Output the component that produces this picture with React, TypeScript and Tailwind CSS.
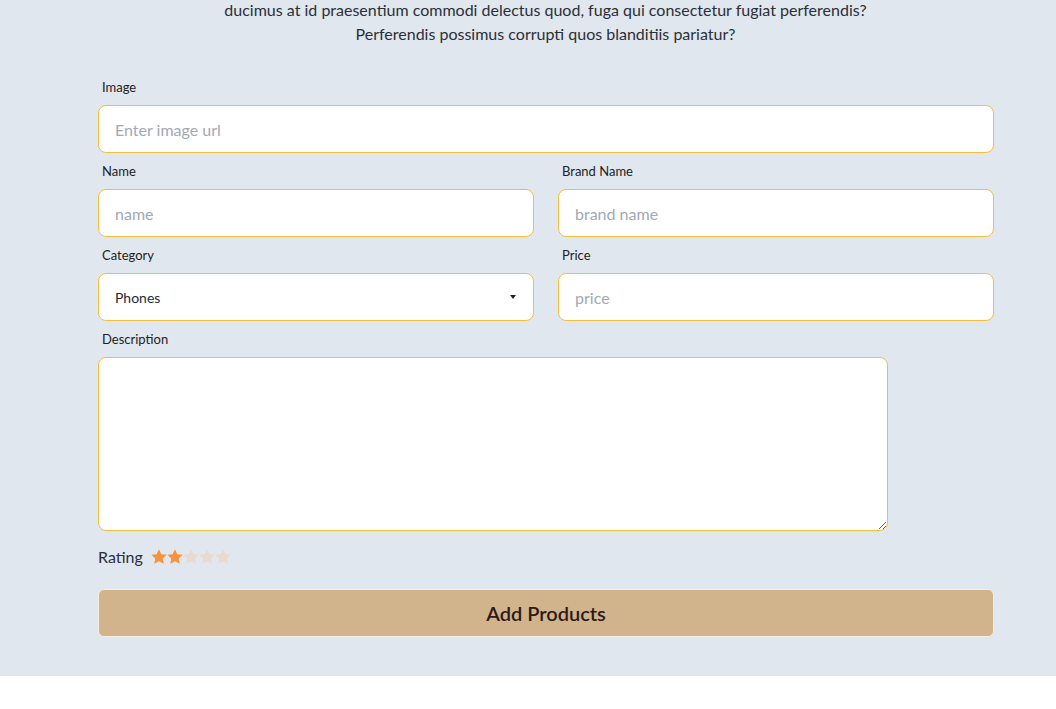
import { useState } from "react";

const inputClass =
  "h-12 w-full rounded-lg border border-[#f6bf3a] bg-white px-4 text-base text-gray-800 outline-none placeholder:text-[#a3a8b3]";

function Field({ label, children }: { label: string; children: React.ReactNode }) {
  return (
    <div>
      <label className="block px-1 py-2 text-[13px] leading-5 text-[#222]">{label}</label>
      {children}
    </div>
  );
}

function Star({ filled }: { filled: boolean }) {
  return (
    <svg viewBox="0 0 24 24" className="h-4 w-4" fill={filled ? "#f8923f" : "#ebd9cd"}>
      <path d="M12 0.5l3.5 7.3 8 1-5.9 5.5 1.5 7.9L12 18.3l-7.1 3.9 1.5-7.9L0.5 8.8l8-1z" />
    </svg>
  );
}

export default function App() {
  const [rating] = useState(2);

  return (
    <div className="bg-white font-['Lato','Noto_Sans',sans-serif]">
      <section className="bg-[#e1e7ef] pb-[39px]">
        <p className="-mt-0.5 pl-[98px] w-[993px] text-center text-base leading-6 text-[#2b2f36]">
          ducimus at id praesentium commodi delectus quod, fuga qui consectetur fugiat perferendis?
          <br />
          Perferendis possimus corrupti quos blanditiis pariatur?
        </p>

        <form className="ml-[98px] mt-[23px] w-[896px]" onSubmit={(e) => e.preventDefault()}>
          <Field label="Image">
            <input className={inputClass} placeholder="Enter image url" />
          </Field>

          <div className="grid grid-cols-2 gap-x-6">
            <Field label="Name">
              <input className={inputClass} placeholder="name" />
            </Field>
            <Field label="Brand Name">
              <input className={inputClass} placeholder="brand name" />
            </Field>
            <Field label="Category">
              <div className="relative">
                <select className={`${inputClass} appearance-none text-[14px]`} defaultValue="Phones">
                  <option>Phones</option>
                  <option>Laptops</option>
                  <option>Watches</option>
                </select>
                <span className="pointer-events-none absolute right-[18px] top-1/2 -translate-y-1/2 border-x-[3.5px] border-t-[4px] border-x-transparent border-t-[#222]" />
              </div>
            </Field>
            <Field label="Price">
              <input className={inputClass} placeholder="price" />
            </Field>
          </div>

          <Field label="Description">
            <textarea className="block h-[174px] w-[790px] rounded-lg border border-[#f6bf3a] bg-white p-4 text-base outline-none" />
          </Field>

          <div className="mt-[14px] flex h-6 items-center gap-2">
            <span className="text-base text-[#2b2f36]">Rating</span>
            <div className="flex">
              {[1, 2, 3, 4, 5].map((n) => (
                <Star key={n} filled={n <= rating} />
              ))}
            </div>
          </div>

          <button
            type="submit"
            className="mt-5 h-12 w-full rounded-md border border-[#f3ede6] bg-[#d2b48c] text-xl font-semibold text-[#2a1a1a]"
          >
            Add Products
          </button>
        </form>
      </section>
    </div>
  );
}
